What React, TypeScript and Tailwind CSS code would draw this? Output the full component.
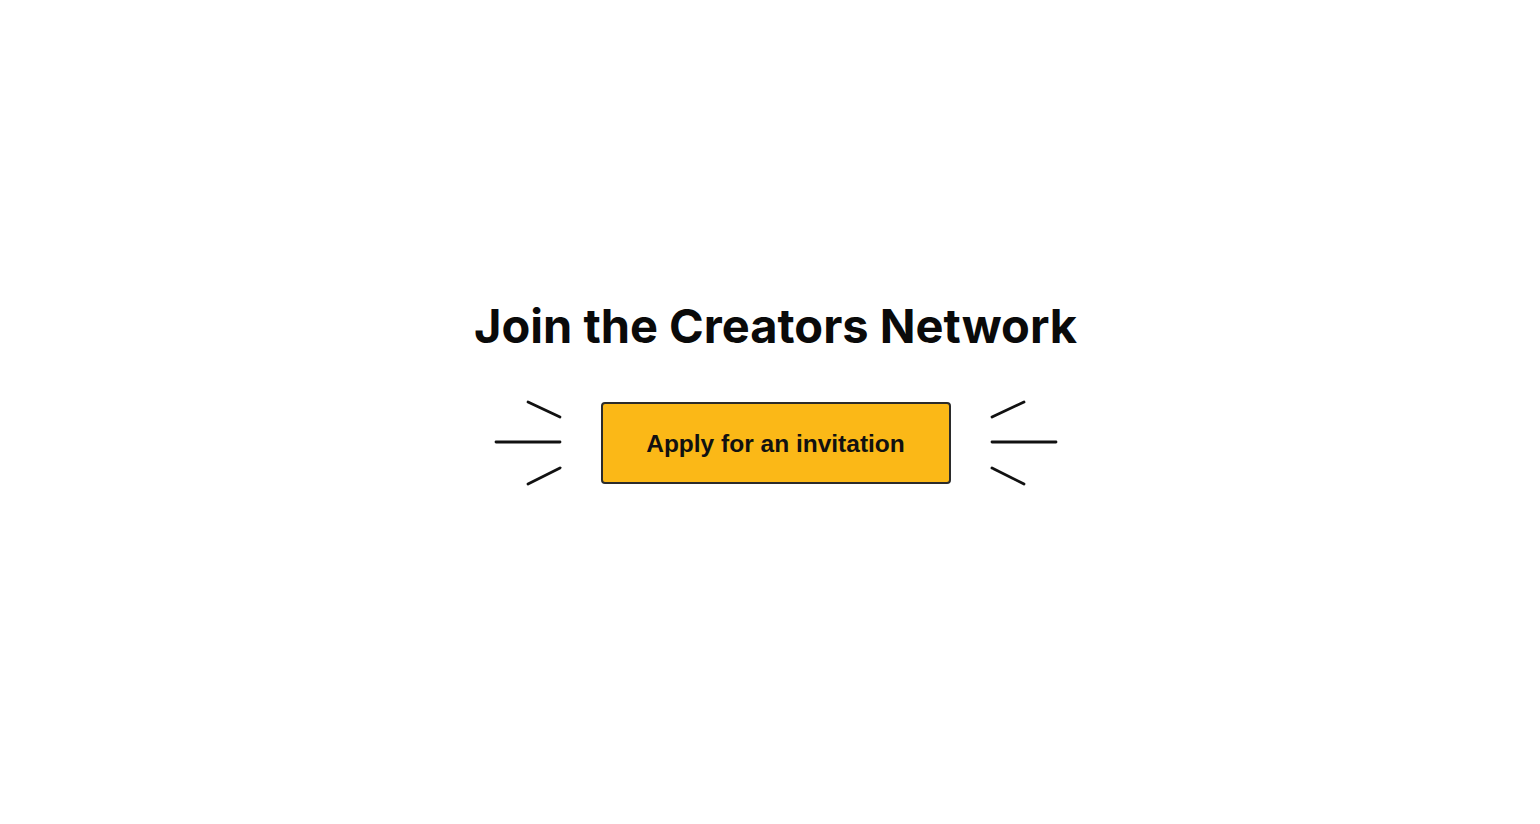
const Burst = ({ flip = false }: { flip?: boolean }) => (
  <svg
    width="68"
    height="86"
    viewBox="0 0 68 86"
    className={flip ? "-scale-x-100" : ""}
    fill="none"
    stroke="#111"
    strokeWidth="2.8"
    strokeLinecap="round"
  >
    <line x1="2" y1="42" x2="66" y2="42" />
    <line x1="34" y1="2" x2="66" y2="17" />
    <line x1="34" y1="84" x2="66" y2="68" />
  </svg>
);

const App = () => {
  return (
    <div className="flex h-screen w-full flex-col items-center bg-white pl-[11px] pt-[294px]">
      <h1 className="font-['Inter',sans-serif] text-[47px] font-bold leading-[64px] text-[#0a0a0a]">
        Join the Creators Network
      </h1>
      <div className="mt-[42px] flex items-center gap-[39px]">
        <Burst />
        <button className="flex h-[82px] w-[350px] items-center justify-center rounded-[4px] border-2 border-[#2b2b2b] bg-[#fbb817] pt-[3px] font-['Liberation_Sans',Arial,sans-serif] text-[24.5px] font-bold text-[#111]">
          Apply for an invitation
        </button>
        <Burst flip />
      </div>
    </div>
  );
};

export default App;
